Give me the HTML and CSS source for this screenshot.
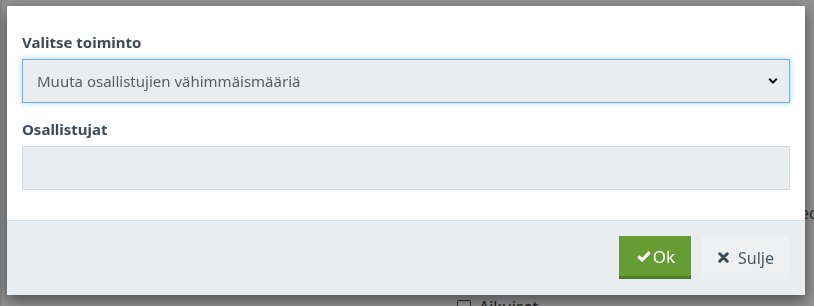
FILE: index.html
```html
<!DOCTYPE html>
<html lang="fi">
<head>
    <meta charset="UTF-8">
    <title>Valitse toiminto</title>
    <link rel="stylesheet" href="styles.css">
</head>
<body>
    <div class="page">
        <div class="side">
            <div class="side-row"></div>
            <div class="side-row"></div>
            <div class="side-row"></div>
            <div class="side-row"></div>
        </div>
        <div class="main">
            <div class="main-head">Tiedot</div>
            <label class="check"><span class="box"></span>Aikuiset</label>
        </div>
    </div>

    <div class="backdrop"></div>

    <div class="modal">
        <div class="modal-body">
            <div class="form-group">
                <label class="control-label">Valitse toiminto</label>
                <div class="select">
                    <span>Muuta osallistujien vähimmäismääriä</span>
                    <svg class="caret" width="10" height="8" viewBox="0 0 10 8">
                        <path d="M1.2 1.8 L5 5.6 L8.8 1.8" fill="none" stroke="#111" stroke-width="2"/>
                    </svg>
                </div>
            </div>
            <div class="form-group">
                <label class="control-label">Osallistujat</label>
                <input class="form-control" type="text">
            </div>
        </div>
        <div class="modal-footer">
            <button class="btn btn-ok">
                <svg width="14" height="12" viewBox="0 0 14 12">
                    <path d="M1.3 6.3 L5.2 10 L12.7 2.2" fill="none" stroke="#fff" stroke-width="3.2" stroke-linejoin="round"/>
                </svg>Ok
            </button>
            <button class="btn btn-close">
                <svg width="11" height="11" viewBox="0 0 11 11">
                    <path d="M1.8 1.8 L9.2 9.2 M9.2 1.8 L1.8 9.2" fill="none" stroke="#3a4853" stroke-width="3" stroke-linecap="round"/>
                </svg>Sulje
            </button>
        </div>
    </div>
</body>
</html>
```

FILE: styles.css
```css
body {
    margin: 0;
    font-family: "Noto Sans", Arial, sans-serif;
    background-color: #f4f4f4;
    height: 306px;
    overflow: hidden;
}

.page {
    display: flex;
    height: 306px;
}

.side {
    width: 22px;
    border-right: 1px solid #ddd;
    padding-top: 44px;
}

.side-row {
    height: 39px;
    border-top: 1px solid #c4c4c4;
}

.main {
    flex: 1;
    display: flex;
    flex-direction: column;
    justify-content: flex-end;
    padding-left: 405px;
    border-left: 1px solid #ddd;
}

.main-head {
    color: #555;
    font-size: 16px;
    padding: 0 0 72px 380px;
}

.check {
    display: flex;
    align-items: center;
    gap: 8px;
    color: #333;
    font-size: 16px;
    margin: 0 0 -12px 50px;
}

.box {
    width: 12px;
    height: 12px;
    border: 1px solid #555;
    border-radius: 2px;
    background: #fff;
}

.backdrop {
    position: fixed;
    inset: 0;
    background: rgba(0, 0, 0, 0.4);
}

.modal {
    position: fixed;
    top: 6px;
    left: 7px;
    width: 798px;
    background: #fff;
    box-shadow: 0 5px 15px rgba(0, 0, 0, 0.5);
}

.modal-body {
    padding: 25px 15px 15px;
}

.form-group {
    margin-bottom: 15px;
}

.control-label {
    display: block;
    font-size: 15px;
    font-weight: bold;
    line-height: 22px;
    color: #3d4c59;
    margin-bottom: 6px;
}

.select {
    display: flex;
    justify-content: space-between;
    align-items: center;
    height: 42px;
    padding: 0 11px 0 14px;
    background: #e9edf0;
    border: 1px solid #6aaee8;
    box-shadow: 0 0 6px rgba(102, 175, 233, 0.55);
    font-size: 15px;
    color: #535e68;
}

.form-control {
    display: block;
    box-sizing: border-box;
    width: 100%;
    height: 44px;
    margin: 0;
    background: #e9edf0;
    border: 1px solid #d3d9de;
    outline: none;
}

.modal-footer {
    display: flex;
    justify-content: flex-end;
    gap: 10px;
    padding: 15px 16px 16px;
    background: #e9edf0;
    border-top: 1px solid #d3d9de;
}

.btn {
    display: flex;
    align-items: center;
    height: 43px;
    border: none;
    font-family: "Noto Sans", Arial, sans-serif;
    font-size: 16px;
    cursor: pointer;
}

.btn-ok {
    box-sizing: border-box;
    width: 72px;
    justify-content: center;
    gap: 2px;
    background: #659d34;
    border-bottom: 3px solid #4e7c27;
    color: #fff;
    font-size: 17px;
    padding: 0 0 0 2px;
}

.btn-close {
    box-sizing: border-box;
    width: 88px;
    justify-content: center;
    gap: 9px;
    background: #eef0f1;
    color: #4c5762;
    padding: 0 0 0 2px;
}
```
